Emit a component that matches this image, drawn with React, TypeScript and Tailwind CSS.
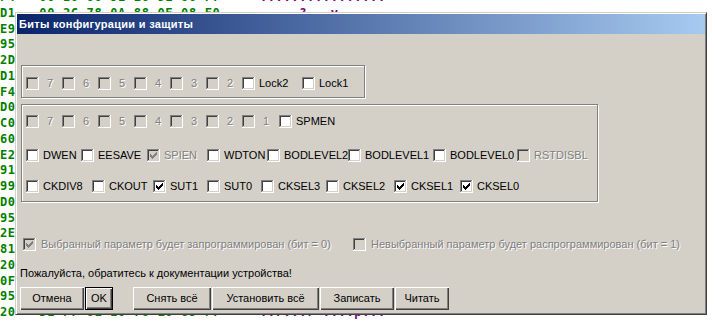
import React from "react";

type Flag = {
  label: string;
  w: string;
  on?: boolean;
  off?: boolean;
  digit?: boolean;
};

// hex dump rows behind the dialog: [bytes, ascii]; rows fully under the window keep only the address
const dumpRows: [string, string][] = [
  ["F4 - 00 E0 80 91 E0 91 80 F7", "................"],
  ["D1 - 00 2C 78 0A 88 0F 08 F0", "     ?   y      "],
  ["E9", ""],
  ["95", ""],
  ["2D", ""],
  ["D1", ""],
  ["F4", ""],
  ["D0", ""],
  ["C0", ""],
  ["60", ""],
  ["E2", ""],
  ["91", ""],
  ["99", ""],
  ["D0", ""],
  ["95", ""],
  ["2E", ""],
  ["81", ""],
  ["20", ""],
  ["0F", ""],
  ["95", ""],
  ["20 - D1 F7 01 E0 70 10 69 F7", "..r...r ....p..."],
];

const lockRow: Flag[] = [
  { label: "7", w: "w-[36px]", off: true, digit: true },
  { label: "6", w: "w-[36px]", off: true, digit: true },
  { label: "5", w: "w-[36px]", off: true, digit: true },
  { label: "4", w: "w-[36px]", off: true, digit: true },
  { label: "3", w: "w-[36px]", off: true, digit: true },
  { label: "2", w: "w-[36px]", off: true, digit: true },
  { label: "Lock2", w: "w-[60px]" },
  { label: "Lock1", w: "w-[56px]" },
];

const extRow: Flag[] = [
  { label: "7", w: "w-[36px]", off: true, digit: true },
  { label: "6", w: "w-[36px]", off: true, digit: true },
  { label: "5", w: "w-[36px]", off: true, digit: true },
  { label: "4", w: "w-[36px]", off: true, digit: true },
  { label: "3", w: "w-[36px]", off: true, digit: true },
  { label: "2", w: "w-[36px]", off: true, digit: true },
  { label: "1", w: "w-[37px]", off: true, digit: true },
  { label: "SPMEN", w: "w-[60px]" },
];

const highRow: Flag[] = [
  { label: "DWEN", w: "w-[55px]" },
  { label: "EESAVE", w: "w-[66px]" },
  { label: "SPIEN", w: "w-[60px]", on: true, off: true },
  { label: "WDTON", w: "w-[58px] mr-[2px]" },
  { label: "BODLEVEL2", w: "w-[81px]" },
  { label: "BODLEVEL1", w: "w-[85px]" },
  { label: "BODLEVEL0", w: "w-[84px]" },
  { label: "RSTDISBL", w: "w-[72px]", off: true },
];

const lowRow: Flag[] = [
  { label: "CKDIV8", w: "w-[66px]" },
  { label: "CKOUT", w: "w-[61px]" },
  { label: "SUT1", w: "w-[54px]", on: true },
  { label: "SUT0", w: "w-[54px]" },
  { label: "CKSEL3", w: "w-[65px]" },
  { label: "CKSEL2", w: "w-[68px]" },
  { label: "CKSEL1", w: "w-[66px]", on: true },
  { label: "CKSEL0", w: "w-[60px]", on: true },
];

// classic 7x7 tick, offsets inside the 13px box
const TICK: [number, number][] = [
  [6, 0], [5, 1], [6, 1], [0, 2], [4, 2], [5, 2], [6, 2],
  [0, 3], [1, 3], [3, 3], [4, 3], [5, 3],
  [0, 4], [1, 4], [2, 4], [3, 4], [4, 4],
  [1, 5], [2, 5], [3, 5], [2, 6],
];

function CheckBox({ checked, disabled }: { checked?: boolean; disabled?: boolean }) {
  const face = disabled ? "#d4d0c8" : "#ffffff";
  const mark = disabled ? "#808080" : "#000000";
  return (
    <svg width="13" height="13" viewBox="0 0 13 13" shapeRendering="crispEdges" className="block shrink-0">
      <rect x="0" y="0" width="13" height="13" fill="#ffffff" />
      <rect x="0" y="0" width="12" height="12" fill="#808080" />
      <rect x="1" y="1" width="11" height="11" fill="#d4d0c8" />
      <rect x="1" y="1" width="10" height="10" fill="#404040" />
      <rect x="2" y="2" width="9" height="9" fill={face} />
      {checked
        ? TICK.map(([x, y]) => (
            <rect key={`${x}-${y}`} x={x + 3} y={y + 3} width="1" height="1" fill={mark} />
          ))
        : null}
    </svg>
  );
}

function FlagBox({ flag }: { flag: Flag }) {
  return (
    <div className={`flex h-[13px] shrink-0 items-center overflow-hidden whitespace-nowrap ${flag.w}`}>
      <CheckBox checked={flag.on} disabled={flag.off} />
      <span
        className={`${flag.digit ? "ml-[8px]" : "ml-[4px]"} ${
          flag.off ? "text-[#808080] [text-shadow:1px_1px_0_#fff]" : "text-black"
        }`}
      >
        {flag.label}
      </span>
    </div>
  );
}

function FlagRow({ flags, className }: { flags: Flag[]; className?: string }) {
  return (
    <div className={`flex h-[13px] items-center ${className ?? ""}`}>
      {flags.map((flag) => (
        <FlagBox key={flag.label} flag={flag} />
      ))}
    </div>
  );
}

const bevel = "shadow-[inset_1px_1px_0_#fff,inset_-1px_-1px_0_#404040,inset_-2px_-2px_0_#808080]";

function DlgButton({ label, w, isDefault }: { label: string; w: string; isDefault?: boolean }) {
  return (
    <button
      type="button"
      className={`h-[23px] shrink-0 bg-[#d4d0c8] text-black ${w} ${isDefault ? "border border-black" : ""}`}
    >
      <span className={`flex h-full w-full items-center justify-center ${bevel}`}>{label}</span>
    </button>
  );
}

function HexDump() {
  return (
    <div className="mt-[-10px] whitespace-pre font-['DejaVu_Sans_Mono',monospace] text-[12px] font-bold leading-[15.75px] tracking-[0.65px]">
      {dumpRows.map(([hex, ascii], i) => (
        <div key={i}>
          <span className="text-[#008000]">{hex}</span>
          {ascii ? (
            <>
              {"     "}
              <span className="text-[#800080]">{ascii}</span>
            </>
          ) : null}
        </div>
      ))}
    </div>
  );
}

function FuseDialog() {
  return (
    <div className="absolute left-[15px] top-[12px] flex h-[303px] w-[692px] flex-col border border-b-[#404040] border-l-[#d4d0c8] border-r-[#404040] border-t-[#d4d0c8] bg-[#d4d0c8] p-px font-['Liberation_Sans',Arial,sans-serif] text-[11px] leading-[13px] text-black shadow-[inset_1px_1px_0_#fff,inset_-1px_-1px_0_#808080]">
      <div className="flex h-[20px] shrink-0 items-center bg-[linear-gradient(to_right,#0a246a,#a6caf0)] pl-[2px] font-bold tracking-[0.3px] text-white">
        Биты конфигурации и защиты
      </div>

      <div className="flex flex-col">
        <div className="ml-[4px] mt-[31px] h-[33px] w-[344px] border border-[#808080] pl-[4px] pt-[11px] shadow-[inset_1px_1px_0_#fff,1px_1px_0_#fff]">
          <FlagRow flags={lockRow} />
        </div>

        <div className="ml-[4px] mt-[6px] h-[98px] w-[577px] border border-[#808080] pl-[4px] pt-[10px] shadow-[inset_1px_1px_0_#fff,1px_1px_0_#fff]">
          <FlagRow flags={extRow} />
          <FlagRow flags={highRow} className="mt-[21px]" />
          <FlagRow flags={lowRow} className="mt-[18px]" />
        </div>

        <div className="ml-[6px] mt-[36px] flex h-[13px] items-center whitespace-nowrap text-[#808080] [text-shadow:1px_1px_0_#fff]">
          <div className="flex w-[330px] items-center">
            <CheckBox checked disabled />
            <span className="ml-[5px]">Выбранный параметр будет запрограммирован (бит = 0)</span>
          </div>
          <div className="flex items-center">
            <CheckBox disabled />
            <span className="ml-[5px]">Невыбранный параметр будет распрограммирован (бит = 1)</span>
          </div>
        </div>

        <p className="ml-[3px] mt-[16px]">Пожалуйста, обратитесь к документации устройства!</p>

        <div className="ml-[3px] mt-[7px] flex">
          <DlgButton label="Отмена" w="w-[64px]" />
          <DlgButton label="OK" w="ml-[1px] w-[28px]" isDefault />
          <DlgButton label="Снять всё" w="ml-[20px] w-[78px]" />
          <DlgButton label="Установить всё" w="ml-[1px] w-[107px]" />
          <DlgButton label="Записать" w="ml-[1px] w-[74px]" />
          <DlgButton label="Читать" w="ml-[1px] w-[54px]" />
        </div>
      </div>
    </div>
  );
}

export default function App() {
  return (
    <div className="relative h-[328px] w-[715px] overflow-hidden bg-white">
      <HexDump />
      <FuseDialog />
    </div>
  );
}
